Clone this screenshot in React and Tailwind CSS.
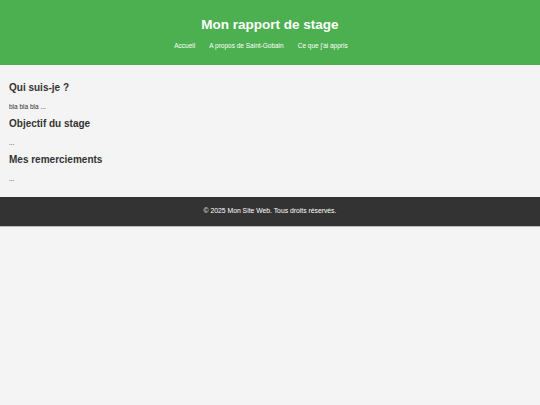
export default function App() {
  const sections = [
    { title: 'Qui suis-je ?', text: 'bla bla bla ...' },
    { title: 'Objectif du stage', text: '...' },
    { title: 'Mes remerciements', text: '...' },
  ];
  return (
    <div className="min-h-[405px] bg-[#f4f4f4] font-['Liberation_Sans',Arial,sans-serif] text-[#333]">
      <header className="flex h-[65px] flex-col items-center bg-[#4caf50] pt-[16px] text-white">
        <h1 className="text-[13.5px] font-bold leading-[18px]">Mon rapport de stage</h1>
        <nav className="mt-[7px] mr-[18px] flex gap-[14px] text-[6.5px] leading-[9px]">
          <a>Accueil</a>
          <a>A propos de Saint-Gobain</a>
          <a>Ce que j'ai appris</a>
        </nav>
      </header>
      <main className="px-[9px] pt-[16px] pb-[8px]">
        {sections.map((s) => (
          <section key={s.title}>
            <h2 className="text-[10px] font-bold leading-[13px]">{s.title}</h2>
            <p className="mt-[7.5px] mb-[6.5px] text-[6.5px] leading-[9px]">{s.text}</p>
          </section>
        ))}
      </main>
      <footer className="flex h-[30px] items-center justify-center border-b border-[#bbb] bg-[#333] text-[6.8px] text-white">
        © 2025 Mon Site Web. Tous droits réservés.
      </footer>
    </div>
  );
}
